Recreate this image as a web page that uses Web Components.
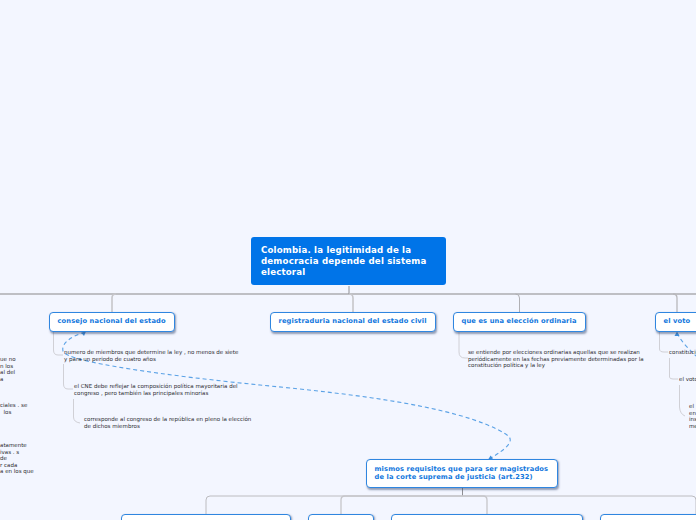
<!DOCTYPE html>
<html lang="es"><head><meta charset="utf-8"><title>Mapa mental</title>
<style>
html,body{margin:0;padding:0;background:#f3f6ff}
</style></head><body>
<template id="map-tpl"><style>
:host{display:block;position:relative;width:696px;height:520px;overflow:hidden;background:#f3f6ff;font-family:"DejaVu Sans",sans-serif}
svg{position:absolute;left:0;top:0}
</style>
<svg width="696" height="520" fill="none">
<g stroke="#b4b4b8" stroke-width="1.5">
<path d="M0 294H696" stroke="#adadb1"/>
<path d="M349 286V294" stroke="#8f8f93" stroke-width="1"/>
<path d="M112 312V298Q112 294 116 294" stroke="#c6c6ca" stroke-width="1.6"/>
<path d="M353 312V298Q353 294 349 294" stroke="#c6c6ca" stroke-width="1.6"/>
<path d="M519.500 312V298Q519.500 294 515.500 294" stroke="#b0b0b4" stroke-width="1"/>
<path d="M677 312V298Q677 294 673 294" stroke="#b8b8bc" stroke-width="1.3"/>
<path d="M462.500 488V496" stroke="#8f8f93" stroke-width="1"/>
<path d="M206 514V500Q206 496 210 496H692Q696 496 696 500V514" stroke="#bcbcc0" stroke-width="1"/>
<path d="M341 514V500Q341 496 345 496H483Q487 496 487 500V514" stroke="#c6c6ca" stroke-width="1.3"/>
</g>
<g stroke="#d0d0d6" stroke-width="1">
<path d="M53.500 332V350Q53.500 355 58 355H63"/>
<path d="M63.500 364V384Q63.500 389 68 389H73"/>
<path d="M73.500 399V417Q73.500 422 80 423"/>
<path d="M459 332V352Q459 358 465 358H468"/>
<path d="M659.500 332V349Q659.500 352 664 352H668"/>
<path d="M669.500 358V377Q669.500 379 673 379H678"/>
<path d="M679.500 385V407Q680 414 685 416"/>
</g>
<g stroke="#5ba2e6" stroke-width="1.1" stroke-dasharray="4 3">
<path d="M85 332C72 336 61 343 63 351C65 362 170 376 260 385C330 392 460 404 507 435C516 441 505 450 489 459"/>
<path d="M677 333C682 343 690 350 696 356"/>
</g>
<g fill="#3f8fdc">
<path d="M86 331.500L81.500 333L84 336Z"/>
<path d="M488 460L490.500 455.500L493 458.500Z"/>
<path d="M677 331.500L674.500 336H679.500Z"/>
</g>
</svg>
<slot></slot></template>

<template id="topic-tpl"><style>
:host{display:flex;align-items:center;position:absolute;box-sizing:border-box;background:#fff;border:1.5px solid #2f86e0;border-radius:4px;box-shadow:1px 1.5px 2px rgba(50,70,110,.5);color:#1277dd;font:bold 6.700px/7.800px "DejaVu Sans",sans-serif;padding:0 7.500px;white-space:nowrap;letter-spacing:.02em}
:host([root]){background:#0074e8;border:none;box-shadow:none;color:#fff;font-size:8.630px;line-height:11.300px;padding:1px 10px 0;border-radius:3px}
</style><div><slot></slot></div></template>

<template id="note-tpl"><style>
:host{display:block;position:absolute;color:#2e2e33;font:5.530px/6.600px "DejaVu Sans",sans-serif;white-space:nowrap}
</style><slot></slot></template>

<mind-map>
<map-topic root style="left:251px;top:237px;width:195px;height:48px">Colombia. la legitimidad de la<br>democracia depende del sistema<br>electoral</map-topic>
<map-topic style="left:49px;top:312px;width:126px;height:20px">consejo nacional del estado</map-topic>
<map-topic style="left:270px;top:312px;width:166px;height:20px">registraduria nacional del estado civil</map-topic>
<map-topic style="left:453px;top:312px;width:133px;height:20px">que es una elección ordinaria</map-topic>
<map-topic style="left:655px;top:312px;width:60px;height:20px">el voto</map-topic>
<map-topic style="left:366px;top:459px;width:192px;height:29px">mismos requisitos que para ser magistrados<br>de la corte suprema de justicia (art.232)</map-topic>
<map-topic style="left:121px;top:514px;width:170px;height:20px"></map-topic>
<map-topic style="left:308px;top:514px;width:66px;height:20px"></map-topic>
<map-topic style="left:391px;top:514px;width:192px;height:20px"></map-topic>
<map-topic style="left:600px;top:514px;width:110px;height:20px"></map-topic>

<map-note style="left:64px;top:349px">numero de miembros que determine la ley , no menos de siete<br>y para un periodo de cuatro años</map-note>
<map-note style="left:74px;top:383px">el CNE debe reflejar la composición política mayoritaria del<br>congreso , pero también las principales minorías</map-note>
<map-note style="left:84px;top:416px">corresponde al congreso de la república en pleno la elección<br>de dichos miembros</map-note>
<map-note style="left:468px;top:349px">se entiende por elecciones ordinarias aquellas que se realizan<br>periódicamente en las fechas previamente determinadas por la<br>constitución política y la ley</map-note>
<map-note style="left:669px;top:349px">constitución</map-note>
<map-note style="left:679px;top:376px">el voto</map-note>
<map-note style="left:689px;top:403px">el<br>en<br>ins<br>me</map-note>
<map-note style="left:0;top:356px">ue no<br>n los<br>al del<br>a</map-note>
<map-note style="left:0;top:402px">ciales . se<br>&nbsp; los</map-note>
<map-note style="left:0;top:442px">atamente<br>ivas . s<br>de<br>r cada<br>a en los que</map-note>
</mind-map>

<script>
function def(name,tpl){customElements.define(name,class extends HTMLElement{constructor(){super();this.attachShadow({mode:"open"}).appendChild(document.getElementById(tpl).content.cloneNode(true));}});}
def("mind-map","map-tpl");def("map-topic","topic-tpl");def("map-note","note-tpl");
</script>
</body></html>
